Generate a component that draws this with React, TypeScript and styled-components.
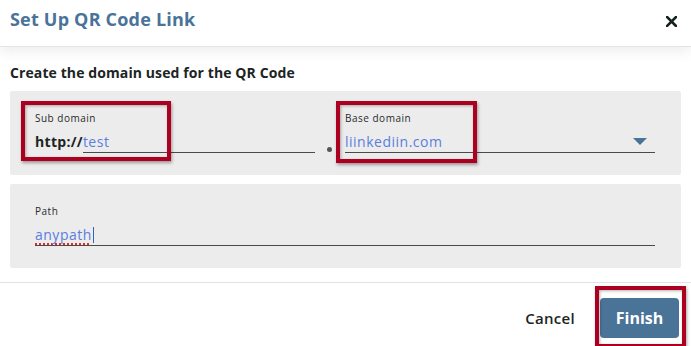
import styled, { createGlobalStyle } from 'styled-components'

const GlobalStyle = createGlobalStyle`
  html, body {
    margin: 0;
    padding: 0;
    background: #fff;
    overflow: hidden;
  }
  body {
    font-family: 'Open Sans', 'Liberation Sans', sans-serif;
    color: #1c2424;
  }
`

const Dialog = styled.div`
  width: 691px;
  height: 346px;
  display: flex;
  flex-direction: column;
  background: #fff;
  overflow: hidden;
`

const Header = styled.header`
  position: relative;
  z-index: 1;
  height: 47px;
  box-sizing: border-box;
  padding: 6px 10px 0 10px;
  display: flex;
  justify-content: space-between;
  align-items: flex-start;
  background: #fff;
  border-bottom: 1px solid #e4e4e4;
  box-shadow: 0 5px 12px rgba(0, 0, 0, 0.07);
`

const Title = styled.h1`
  margin: 0;
  font-size: 18px;
  line-height: 26px;
  font-weight: 700;
  color: #4a7399;
  letter-spacing: 0.2px;
`

const CloseButton = styled.button`
  border: 0;
  background: none;
  padding: 0;
  margin: 10px 4px 0 0;
  width: 11px;
  height: 11px;
  display: flex;
  cursor: pointer;
`

const Body = styled.div`
  padding: 17px 10px 14px 10px;
  display: flex;
  flex-direction: column;
  gap: 9px;
`

const Subtitle = styled.h2`
  margin: 0;
  font-size: 14px;
  line-height: 18px;
  font-weight: 700;
  color: #1c2424;
  letter-spacing: 0.1px;
`

const Panel = styled.div<{ $top: number; $bottom: number }>`
  background: #ececec;
  border-radius: 2px;
  padding: ${(p) => p.$top}px 25px ${(p) => p.$bottom}px 25px;
  display: flex;
  align-items: flex-end;
`

const Field = styled.div<{ $width?: number }>`
  position: relative;
  display: flex;
  flex-direction: column;
  width: ${(p) => (p.$width ? `${p.$width}px` : '100%')};
`

const Label = styled.label`
  font-size: 10px;
  line-height: 12px;
  color: #2a2a2a;
  letter-spacing: 0.5px;
  margin-bottom: 7px;
`

const ValueRow = styled.div`
  display: flex;
  align-items: flex-end;
`

const Prefix = styled.span`
  font-size: 14px;
  font-weight: 700;
  line-height: 21px;
  color: #1c2424;
  padding-bottom: 1px;
  letter-spacing: 0.3px;
`

const Input = styled.div`
  flex: 1;
  display: flex;
  align-items: center;
  justify-content: space-between;
  height: 21px;
  border-bottom: 1px solid #4a4a4a;
  font-size: 14px;
  line-height: 21px;
  letter-spacing: 0.5px;
  color: #5a7ee0;
`

const Misspelled = styled.span`
  text-decoration: underline dotted #e02a2a;
  text-decoration-thickness: 1.5px;
  text-underline-offset: 3px;
`

const Caret = styled.span`
  display: inline-block;
  width: 1px;
  height: 16px;
  margin-left: 1px;
  background: #3b5fc0;
  vertical-align: -3px;
`

const Separator = styled.div`
  width: 30px;
  display: flex;
  justify-content: center;
  padding-bottom: 1px;
  padding-right: 2px;
  box-sizing: border-box;

  &::before {
    content: '';
    width: 5px;
    height: 5px;
    border-radius: 50%;
    background: #555;
  }
`

const Highlight = styled.div<{ $x: number; $y: number; $w: number; $h: number }>`
  position: absolute;
  left: ${(p) => p.$x}px;
  top: ${(p) => p.$y}px;
  width: ${(p) => p.$w}px;
  height: ${(p) => p.$h}px;
  box-sizing: border-box;
  border: 4px solid #ad0021;
  box-shadow: 1px 2px 3px rgba(0, 0, 0, 0.35), inset 1px 1px 3px rgba(0, 0, 0, 0.3);
  pointer-events: none;
`

const Footer = styled.footer`
  border-top: 1px solid #e2e2e2;
  padding: 15px 12px 0 0;
  display: flex;
  justify-content: flex-end;
  align-items: center;
  gap: 25px;
`

const TextButton = styled.button`
  border: 0;
  background: none;
  padding: 0;
  font-family: inherit;
  font-size: 15px;
  font-weight: 600;
  letter-spacing: 0.3px;
  color: #1c2424;
  cursor: pointer;
`

const PrimaryButton = styled.button`
  position: relative;
  width: 79px;
  height: 40px;
  border: 0;
  border-radius: 4px;
  background: #4a7398;
  color: #fff;
  font-family: inherit;
  font-size: 16px;
  font-weight: 700;
  cursor: pointer;
`

const ArrowSlot = styled.span`
  display: flex;
  margin-right: 8px;
`

const DropArrow = () => (
  <svg width="14" height="8" viewBox="0 0 14 8">
    <path d="M0 0 L14 0 L7 7 Z" fill="#4a7399" />
  </svg>
)

const CloseIcon = () => (
  <svg width="11" height="11" viewBox="0 0 11 11">
    <path d="M1 1 L10 10 M10 1 L1 10" stroke="#142222" strokeWidth="2.6" strokeLinecap="square" />
  </svg>
)

export default function App() {
  return (
    <>
      <GlobalStyle />
      <Dialog>
        <Header>
          <Title>Set Up QR Code Link</Title>
          <CloseButton aria-label="Close">
            <CloseIcon />
          </CloseButton>
        </Header>

        <Body>
          <Subtitle>Create the domain used for the QR Code</Subtitle>

          <Panel $top={21} $bottom={22}>
            <Field $width={280}>
              <Highlight $x={-14} $y={-11} $w={150} $h={60} />
              <Label>Sub domain</Label>
              <ValueRow>
                <Prefix>http://</Prefix>
                <Input>test</Input>
              </ValueRow>
            </Field>
            <Separator />
            <Field $width={310}>
              <Highlight $x={-9} $y={-11} $w={141} $h={62} />
              <Label>Base domain</Label>
              <ValueRow>
                <Input>
                  liinkediin.com
                  <ArrowSlot>
                    <DropArrow />
                  </ArrowSlot>
                </Input>
              </ValueRow>
            </Field>
          </Panel>

          <Panel $top={21} $bottom={22}>
            <Field $width={620}>
              <Label>Path</Label>
              <ValueRow>
                <Input>
                  <span>
                    <Misspelled>anypath</Misspelled>
                    <Caret />
                  </span>
                </Input>
              </ValueRow>
            </Field>
          </Panel>
        </Body>

        <Footer>
          <TextButton>Cancel</TextButton>
          <PrimaryButton>
            <Highlight $x={-5} $y={-12} $w={91} $h={62} />
            Finish
          </PrimaryButton>
        </Footer>
      </Dialog>
    </>
  )
}
